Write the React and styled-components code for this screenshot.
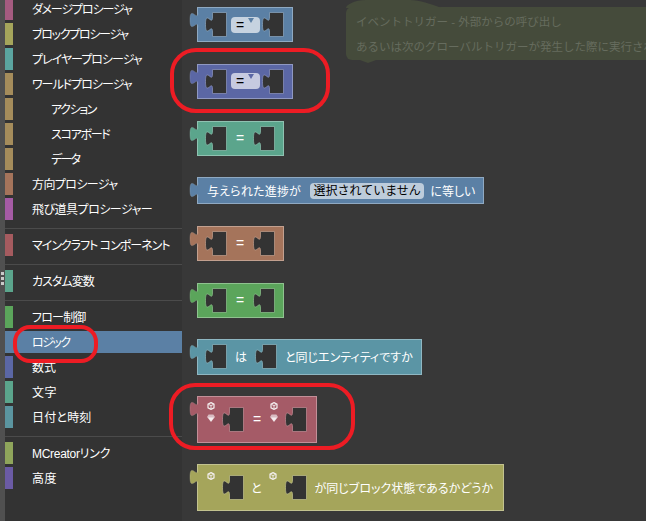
import React from 'react'
import styled, { createGlobalStyle } from 'styled-components'

const Global = createGlobalStyle`
  html, body { margin: 0; padding: 0; background: #383838; }
  body {
    font-family: "Liberation Sans", "Noto Sans CJK JP", sans-serif;
    font-size: 12px;
    font-feature-settings: "palt";
  }
`

const Screen = styled.div`
  position: relative;
  display: grid;
  grid-template-columns: 5px 177px 1fr;
  width: 646px;
  height: 521px;
  overflow: hidden;
`

const Rail = styled.div`
  background: #505050;
  display: flex;
  flex-direction: column;
  align-items: center;
  gap: 2px;
  padding-top: 272px;
`

const Dot = styled.span`
  width: 3px;
  height: 3px;
  background: #c9c9c9;
`

const Sidebar = styled.nav`
  background: #333333;
  color: #fff;
  margin-top: -2px;
`

const Row = styled.div`
  display: flex;
  align-items: center;
  height: 22px;
  margin-bottom: 3px;
  background: ${(p) => (p.$active ? '#5b80a5' : 'transparent')};
`

const Swatch = styled.span`
  width: 8px;
  height: 22px;
  background: ${(p) => p.$color};
  flex: none;
`

const RowLabel = styled.span`
  margin-left: ${(p) => (p.$sub ? '38px' : '19px')};
  padding-bottom: 2px;
  letter-spacing: ${(p) => p.$track ?? 0}px;
  white-space: nowrap;
`

const Divider = styled.hr`
  border: 0;
  height: 1px;
  background: #4b4b4b;
  margin: 8px 0 5px;
`

const Workspace = styled.main`
  position: relative;
  background: #383838;
  display: flex;
  flex-direction: column;
  align-items: flex-start;
  gap: 21.5px;
  padding: 7px 0 0 15px;
  color: #fff;
`

const Block = styled.div`
  position: relative;
  z-index: 1;
  display: flex;
  align-items: center;
  gap: ${(p) => p.$gap ?? 0}px;
  box-sizing: border-box;
  height: ${(p) => p.$h ?? 35.25}px;
  padding: 0 ${(p) => p.$right ?? 8}px 0 ${(p) => p.$left ?? 7}px;
  background: ${(p) => p.$color};
  border: 1px solid color-mix(in srgb, ${(p) => p.$color} 68%, white);
  white-space: nowrap;
`

const TabSvg = styled.svg`
  position: absolute;
  left: -9px;
  top: 4px;
  width: 9px;
  height: 16px;
  overflow: visible;
`

const SlotSvg = styled.svg`
  flex: none;
  width: 22px;
  height: 25px;
`

const Dropdown = styled.span`
  position: relative;
  display: block;
  box-sizing: border-box;
  width: 29px;
  height: 16px;
  margin: 0 2px 0 4px;
  padding-left: 5px;
  border-radius: 4px;
  background: color-mix(in srgb, ${(p) => p.$color} 35%, white);
  color: #000;
  font-size: 14px;
  line-height: 16px;
`

const Caret = styled.i`
  position: absolute;
  top: 1px;
  right: 6px;
  width: 0;
  height: 0;
  border-left: 3px solid transparent;
  border-right: 3px solid transparent;
  border-top: 5px solid ${(p) => p.$color};
`

const Pill = styled.span`
  display: block;
  margin: 0 6px 0 9px;
  padding: 0 3.5px;
  height: 16px;
  line-height: 16px;
  border-radius: 4px;
  background: #bdccdb;
  color: #000;
  font-feature-settings: normal;
`

const Eq = styled.span`
  font-size: 14px;
  margin: 0 ${(p) => p.$pad ?? 0}px;
`

const Label = styled.span`
  margin-left: ${(p) => p.$ml ?? 0}px;
  letter-spacing: ${(p) => p.$track ?? 0}px;
`

const IconStack = styled.div`
  align-self: flex-start;
  display: flex;
  flex-direction: column;
  gap: 4px;
  width: ${(p) => p.$w ?? 8}px;
  margin-top: ${(p) => p.$top}px;
`

const MiniIcon = styled.svg`
  display: block;
  width: 8px;
  height: 8px;
`

const Comment = styled.aside`
  position: absolute;
  left: 164px;
  top: 7px;
  width: 340px;
  height: 53px;
  box-sizing: border-box;
  padding: 3px 10px;
  background: #454b3b;
  border-radius: 6px 0 0 6px;
  color: #666c5e;
  font-size: 11.5px;
  font-feature-settings: normal;
  line-height: 25px;
  white-space: nowrap;
`

const CommentHat = styled.svg`
  position: absolute;
  left: 0;
  top: -7px;
  width: 96px;
  height: 8px;
`

const CommentNotch = styled.svg`
  position: absolute;
  left: 14px;
  bottom: -3px;
  width: 16px;
  height: 3px;
`

const Ring = styled.div`
  position: absolute;
  z-index: 5;
  box-sizing: border-box;
  left: ${(p) => p.$x}px;
  top: ${(p) => p.$y}px;
  width: ${(p) => p.$w}px;
  height: ${(p) => p.$h}px;
  border: 4.5px solid #ed1c24;
  border-radius: ${(p) => p.$r}px;
  pointer-events: none;
`

const Tab = ({ color }) => {
  const edge = `color-mix(in srgb, ${color} 68%, white)`
  return (
    <TabSvg viewBox="0 0 9 16">
      <path d="M9 0.5c0 10-8-8-8 7.5s8-2.5 8 7.5z" fill={color} />
      <path d="M9 0.5c0 10-8-8-8 7.5s8-2.5 8 7.5" fill="none" stroke={edge} strokeOpacity="0.35" />
    </TabSvg>
  )
}

const Slot = ({ color }) => (
  <SlotSvg viewBox="0 0 22 25">
    <path
      d="M7.5 0.5V5c0 10-7-8-7 7.5s7-2.5 7 7.5v4.5h14V0.5z"
      fill="#333333"
      stroke={`color-mix(in srgb, ${color} 72%, white)`}
      strokeOpacity="0.75"
    />
  </SlotSvg>
)

// small cube drawn as a white outline, block colour showing through
const Cube = () => (
  <MiniIcon viewBox="0 0 8 8">
    <path d="M4 .6l3 1.6v3.6L4 7.4 1 5.8V2.2z" fill="none" stroke="#f4efef" strokeWidth="1.2" />
    <path d="M4 3.6v3.4M1.4 2.4L4 3.6l2.6-1.2" stroke="#f4efef" strokeWidth="0.9" fill="none" />
  </MiniIcon>
)

const Gem = () => (
  <MiniIcon viewBox="0 0 8 8">
    <path d="M1.6 0.6h4.8L8 3 4 8 0 3z" fill="#d9bcc2" />
    <path d="M1 3.4h6L4 7.4z" fill="#f7eeef" />
  </MiniIcon>
)

const menu = [
  { label: 'ダメージプロシージャ', color: '#a55b80', track: -1.1 },
  { label: 'ブロックプロシージャ', color: '#a5a55b', track: -1.3 },
  { label: 'プレイヤープロシージャ', color: '#5ba5a0', track: -1 },
  { label: 'ワールドプロシージャ', color: '#a58c5b', track: -1 },
  { label: 'アクション', color: '#a58c5b', sub: true, track: -1.4 },
  { label: 'スコアボード', color: '#a58c5b', sub: true, track: -1.3 },
  { label: 'データ', color: '#a58c5b', sub: true, track: -1.7 },
  { label: '方向プロシージャ', color: '#a5745b', track: -0.6 },
  { label: '飛び道具プロシージャー', color: '#a55ba5', track: -0.5 },
  { divider: true },
  { label: 'マインクラフト コンポーネント', color: '#a55b5f', track: -1 },
  { divider: true },
  { label: 'カスタム変数', color: '#5ba58c', track: -1 },
  { divider: true },
  { label: 'フロー制御', color: '#5ba55b', track: -0.8 },
  { label: 'ロジック', color: '#5b80a5', active: true, track: -1.5 },
  { label: '数式', color: '#5b67a5' },
  { label: '文字', color: '#5ba58c', track: 0.5 },
  { label: '日付と時刻', color: '#5b95a0', track: 0.2 },
  { divider: true },
  { label: 'MCreatorリンク', color: '#8fa55b', track: -0.3 },
  { label: '高度', color: '#6b5ba5', track: 0.5 },
]

const EqBlock = ({ color }) => (
  <Block $color={color} $gap={9}>
    <Tab color={color} />
    <Slot color={color} />
    <Eq>=</Eq>
    <Slot color={color} />
  </Block>
)

const DropBlock = ({ color }) => (
  <Block $color={color}>
    <Tab color={color} />
    <Slot color={color} />
    <Dropdown $color={color}>
      =<Caret $color={color} />
    </Dropdown>
    <Slot color={color} />
  </Block>
)

export default function App() {
  return (
    <Screen>
      <Global />
      <Rail>
        <Dot />
        <Dot />
        <Dot />
      </Rail>
      <Sidebar>
        {menu.map((item, i) =>
          item.divider ? (
            <Divider key={i} />
          ) : (
            <Row key={i} $active={item.active}>
              <Swatch $color={item.color} />
              <RowLabel $sub={item.sub} $track={item.track}>{item.label}</RowLabel>
            </Row>
          )
        )}
      </Sidebar>
      <Workspace>
        <Comment>
          <CommentHat viewBox="0 0 96 8">
            <path d="M0 8C0 5 8 0 20 0h44c10 0 20 4 32 8z" fill="#454b3b" />
          </CommentHat>
          <CommentNotch viewBox="0 0 16 3">
            <path d="M0 0h16L8 3z" fill="#454b3b" />
          </CommentNotch>
          イベントトリガー - 外部からの呼び出し
          <br />
          あるいは次のグローバルトリガーが発生した際に実行されます
        </Comment>

        <DropBlock color="#5b80a5" />
        <DropBlock color="#5b67a5" />
        <EqBlock color="#5ba58c" />

        <Block $color="#5b80a5" $h={27} $left={9} $right={8}>
          <Tab color="#5b80a5" />
          <Label $track={0.2}>与えられた進捗が</Label>
          <Pill>選択されていません</Pill>
          <span>に等しい</span>
        </Block>

        <EqBlock color="#a5745b" />
        <EqBlock color="#5ba55b" />

        <Block $color="#5b95a5" $gap={8} $right={8}>
          <Tab color="#5b95a5" />
          <Slot color="#5b95a5" />
          <span>は</span>
          <Slot color="#5b95a5" />
          <span>と同じエンティティですか</span>
        </Block>

        <Block $color="#a55b67" $h={46.5} $left={9} $right={9} $gap={7}>
          <Tab color="#a55b67" />
          <IconStack $top={5}>
            <Cube />
            <Gem />
          </IconStack>
          <Slot color="#a55b67" />
          <Eq $pad={2}>=</Eq>
          <IconStack $top={5}>
            <Cube />
            <Gem />
          </IconStack>
          <Slot color="#a55b67" />
        </Block>

        <Block $color="#a5a55b" $h={46.5} $left={9} $right={10} $gap={7}>
          <Tab color="#a5a55b" />
          <IconStack $top={7}>
            <Cube />
          </IconStack>
          <Slot color="#a5a55b" />
          <Label>と</Label>
          <IconStack $top={7} $w={9}>
            <Cube />
          </IconStack>
          <Slot color="#a5a55b" />
          <Label $ml={1}>が同じブロック状態であるかどうか</Label>
        </Block>
      </Workspace>

      <Ring $x={170} $y={48} $w={160} $h={65} $r={26} />
      <Ring $x={169} $y={383} $w={186} $h={67} $r={26} />
      <Ring $x={13} $y={325} $w={85} $h={38} $r={17} />
    </Screen>
  )
}
